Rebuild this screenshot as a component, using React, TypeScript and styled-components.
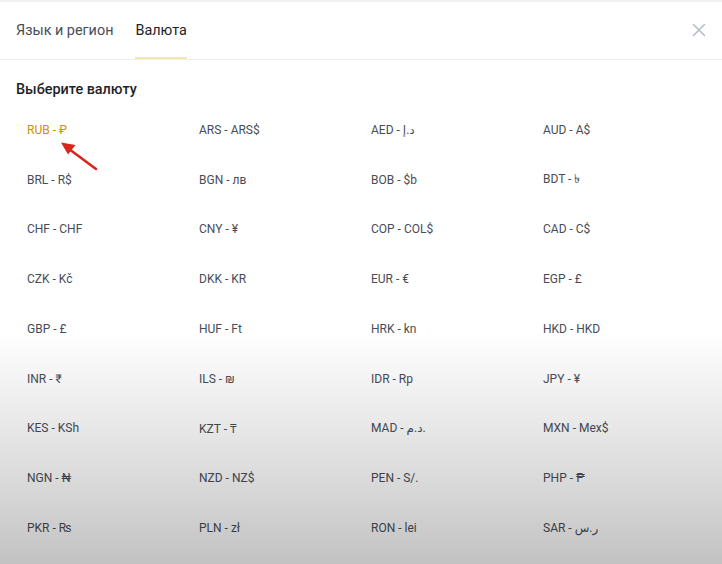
import styled, { createGlobalStyle } from "styled-components";

const GlobalStyle = createGlobalStyle`
  html, body {
    margin: 0;
    padding: 0;
    background: #ffffff;
  }
  body {
    font-family: Roboto, "Noto Sans", "DejaVu Sans", sans-serif;
    -webkit-font-smoothing: antialiased;
  }
`;

const currencies: { code: string; symbol: string }[] = [
  { code: "RUB", symbol: "₽" },
  { code: "ARS", symbol: "ARS$" },
  { code: "AED", symbol: "د.إ" },
  { code: "AUD", symbol: "A$" },
  { code: "BRL", symbol: "R$" },
  { code: "BGN", symbol: "лв" },
  { code: "BOB", symbol: "$b" },
  { code: "BDT", symbol: "৳" },
  { code: "CHF", symbol: "CHF" },
  { code: "CNY", symbol: "¥" },
  { code: "COP", symbol: "COL$" },
  { code: "CAD", symbol: "C$" },
  { code: "CZK", symbol: "Kč" },
  { code: "DKK", symbol: "KR" },
  { code: "EUR", symbol: "€" },
  { code: "EGP", symbol: "£" },
  { code: "GBP", symbol: "£" },
  { code: "HUF", symbol: "Ft" },
  { code: "HRK", symbol: "kn" },
  { code: "HKD", symbol: "HKD" },
  { code: "INR", symbol: "₹" },
  { code: "ILS", symbol: "₪" },
  { code: "IDR", symbol: "Rp" },
  { code: "JPY", symbol: "¥" },
  { code: "KES", symbol: "KSh" },
  { code: "KZT", symbol: "₸" },
  { code: "MAD", symbol: ".د.م" },
  { code: "MXN", symbol: "Mex$" },
  { code: "NGN", symbol: "₦" },
  { code: "NZD", symbol: "NZ$" },
  { code: "PEN", symbol: "S/." },
  { code: "PHP", symbol: "₱" },
  { code: "PKR", symbol: "₨" },
  { code: "PLN", symbol: "zł" },
  { code: "RON", symbol: "lei" },
  { code: "SAR", symbol: "ر.س" },
];

const App = () => {
  const selected = "RUB";

  return (
    <>
      <GlobalStyle />
      <Modal>
        <Header>
          <Tabs>
            <Tab>Язык и регион</Tab>
            <Tab active>Валюта</Tab>
          </Tabs>
          <CloseButton aria-label="close">
            <svg width="14" height="14" viewBox="0 0 14 14">
              <path
                d="M1.5 1.5 L12.5 12.5 M12.5 1.5 L1.5 12.5"
                stroke="#b7bdc6"
                strokeWidth="1.6"
                strokeLinecap="round"
              />
            </svg>
          </CloseButton>
        </Header>
        <Body>
          <Title>Выберите валюту</Title>
          <Grid>
            {currencies.map((c) => (
              <Item key={c.code} selected={c.code === selected}>
                <span>
                  {c.code} - <bdi>{c.symbol}</bdi>
                </span>
              </Item>
            ))}
          </Grid>
          <Arrow width="44" height="34" viewBox="0 0 44 34">
            <path d="M37 30 L10 10" stroke="#d9261c" strokeWidth="2.6" strokeLinecap="round" />
            <path d="M2 3.5 L16.5 6 L9 15.5 Z" fill="#d9261c" />
          </Arrow>
        </Body>
        <Shade />
      </Modal>
    </>
  );
};

export default App;

const Modal = styled.div`
  position: relative;
  width: 722px;
  height: 564px;
  overflow: hidden;
  background: #ffffff;
  border-top: 2px solid #f1f1f1;
  box-sizing: border-box;
`;

const Header = styled.div`
  display: flex;
  align-items: stretch;
  justify-content: space-between;
  height: 57px;
  border-bottom: 1px solid #eeeeee;
`;

const Tabs = styled.div`
  display: flex;
  gap: 22px;
  padding-left: 16px;
`;

const Tab = styled.div<{ active?: boolean }>`
  display: flex;
  align-items: center;
  padding-top: 1px;
  font-size: 14.4px;
  color: ${(p) => (p.active ? "#1e2329" : "#474d57")};
  border-bottom: 2px solid ${(p) => (p.active ? "#f3e9a8" : "transparent")};
  box-sizing: border-box;
`;

const CloseButton = styled.button`
  display: flex;
  align-items: center;
  justify-content: center;
  width: 40px;
  padding: 0 6px 0 0;
  margin-top: -2px;
  border: none;
  background: transparent;
`;

const Body = styled.div`
  position: relative;
  padding: 20px 0 0 16px;
`;

const Title = styled.div`
  height: 20px;
  line-height: 20px;
  font-size: 14.4px;
  font-weight: 500;
  color: #1e2329;
`;

const Grid = styled.div`
  display: grid;
  grid-template-columns: repeat(4, 172px);
  grid-auto-rows: 49.75px;
  margin-top: 5px;
`;

const Item = styled.div<{ selected?: boolean }>`
  display: flex;
  align-items: center;
  padding-left: 11px;
  font-size: 12px;
  white-space: pre;
  color: ${(p) => (p.selected ? "#c99400" : "#474d57")};
`;

const Arrow = styled.svg`
  position: absolute;
  left: 59px;
  top: 79px;
`;

const Shade = styled.div`
  position: absolute;
  left: 0;
  right: 0;
  top: 330px;
  bottom: 0;
  pointer-events: none;
  background: linear-gradient(
    to bottom,
    rgba(0, 0, 0, 0) 0%,
    rgba(0, 0, 0, 0.08) 35%,
    rgba(0, 0, 0, 0.16) 70%,
    rgba(0, 0, 0, 0.24) 100%
  );
`;
